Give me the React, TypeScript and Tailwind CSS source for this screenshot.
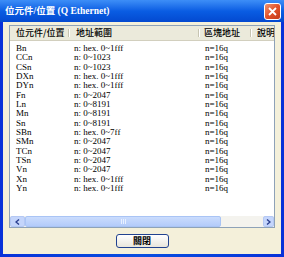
import * as React from "react"

const rows: [string, string][] = [
  ["Bn", "n: hex. 0~1fff"],
  ["CCn", "n: 0~1023"],
  ["CSn", "n: 0~1023"],
  ["DXn", "n: hex. 0~1fff"],
  ["DYn", "n: hex. 0~1fff"],
  ["Fn", "n: 0~2047"],
  ["Ln", "n: 0~8191"],
  ["Mn", "n: 0~8191"],
  ["Sn", "n: 0~8191"],
  ["SBn", "n: hex. 0~7ff"],
  ["SMn", "n: 0~2047"],
  ["TCn", "n: 0~2047"],
  ["TSn", "n: 0~2047"],
  ["Vn", "n: 0~2047"],
  ["Xn", "n: hex. 0~1fff"],
  ["Yn", "n: hex. 0~1fff"],
]

const serif = "font-['Liberation_Serif','Noto_Sans_CJK_TC',serif]"
const cjk = "font-['Noto_Sans_CJK_TC','Liberation_Serif',sans-serif]"

const HeaderCell = ({ label, w, pl }: { label: string; w: string; pl: string }) => (
  <div className={`relative flex h-full shrink-0 items-center ${w} ${pl}`}>
    <span className="whitespace-nowrap">{label}</span>
    <div className="absolute right-0 top-[3px] bottom-[3px] flex">
      <div className="w-px bg-[#c7c5b2]" />
      <div className="w-px bg-white" />
    </div>
  </div>
)

export default function App() {
  return (
    <div className="flex h-[257px] w-[284px] flex-col overflow-hidden bg-gradient-to-r from-[#0831d9] via-[#0a4fe0] to-[#0831d9]">
      {/* title bar */}
      <div className="flex h-[22px] shrink-0 items-center justify-between bg-gradient-to-b from-[#3d8ef7] via-[#0a5de3] to-[#0449d0] pl-[5px] pr-[3px]">
        <span className={`whitespace-nowrap text-[9.5px] font-bold text-white ${serif}`}>
          位元件/位置 (Q Ethernet)
        </span>
        <div className="flex h-[17px] w-[17px] items-center justify-center rounded-[3px] border border-white bg-gradient-to-br from-[#f0926e] via-[#e1522a] to-[#c43a17]">
          <svg width="9" height="9" viewBox="0 0 9 9">
            <path d="M1 1 L8 8 M8 1 L1 8" stroke="white" strokeWidth="1.8" />
          </svg>
        </div>
      </div>

      {/* body */}
      <div className="mx-[3px] mb-[3px] flex flex-1 flex-col items-center bg-[#f4f0da] px-[6px] pt-[3px]">
        <div className="flex h-[203px] w-full flex-col overflow-hidden border border-[#8ea2b8] bg-white">
          {/* header */}
          <div className={`flex h-[15px] shrink-0 border-b border-[#d2cfbe] bg-[#ebeadb] text-[9px] font-medium text-black ${cjk}`}>
            <HeaderCell label="位元件/位置" w="w-[60px]" pl="pl-[6px]" />
            <HeaderCell label="地址範圍" w="w-[130px]" pl="pl-[6px]" />
            <HeaderCell label="區塊地址" w="w-[52px]" pl="pl-[4px]" />
            <HeaderCell label="說明" w="w-[60px]" pl="pl-[5px]" />
          </div>

          {/* rows */}
          <div className={`flex flex-col pt-[3px] text-[9px] text-black ${serif}`}>
            {rows.map(([dev, range]) => (
              <div key={dev} className="flex h-[9.33px] items-center">
                <span className="w-[60px] shrink-0 pl-[6px]">{dev}</span>
                <span className="w-[130px] shrink-0 whitespace-nowrap pl-[4px]">{range}</span>
                <span className="w-[52px] shrink-0 pl-[5px]">n=16q</span>
              </div>
            ))}
          </div>

          <div className="flex-1" />

          {/* horizontal scrollbar */}
          <div className="flex h-[11px] shrink-0 bg-[#f4f3ee]">
            <div className="flex w-[15px] items-center justify-center rounded-[2px] border border-[#b4c8f4] bg-[#c4d5fb]">
              <svg width="5" height="6" viewBox="0 0 5 6">
                <path d="M4 0.5 L1 3 L4 5.5" stroke="#2a3f8f" strokeWidth="1.4" fill="none" />
              </svg>
            </div>
            <div className="flex w-[196px] items-center justify-center rounded-[2px] border border-[#a9c4f5] bg-gradient-to-b from-[#cadcfd] to-[#b3cbfa]">
              <div className="flex gap-[1px]">
                <div className="h-[5px] w-px bg-[#e8f0ff]" />
                <div className="h-[5px] w-px bg-[#e8f0ff]" />
                <div className="h-[5px] w-px bg-[#e8f0ff]" />
              </div>
            </div>
            <div className="flex-1" />
            <div className="flex w-[11px] items-center justify-center rounded-[2px] border border-[#b4c8f4] bg-[#c4d5fb]">
              <svg width="5" height="6" viewBox="0 0 5 6">
                <path d="M1 0.5 L4 3 L1 5.5" stroke="#2a3f8f" strokeWidth="1.4" fill="none" />
              </svg>
            </div>
          </div>
        </div>

        {/* close button */}
        <div className={`mt-[6px] flex h-[14px] w-[53px] items-center justify-center rounded-[3px] border border-[#21428f] bg-gradient-to-b from-white to-[#e8e6dc] text-[9px] font-bold text-black ${cjk}`}>
          關閉
        </div>
      </div>
    </div>
  )
}
